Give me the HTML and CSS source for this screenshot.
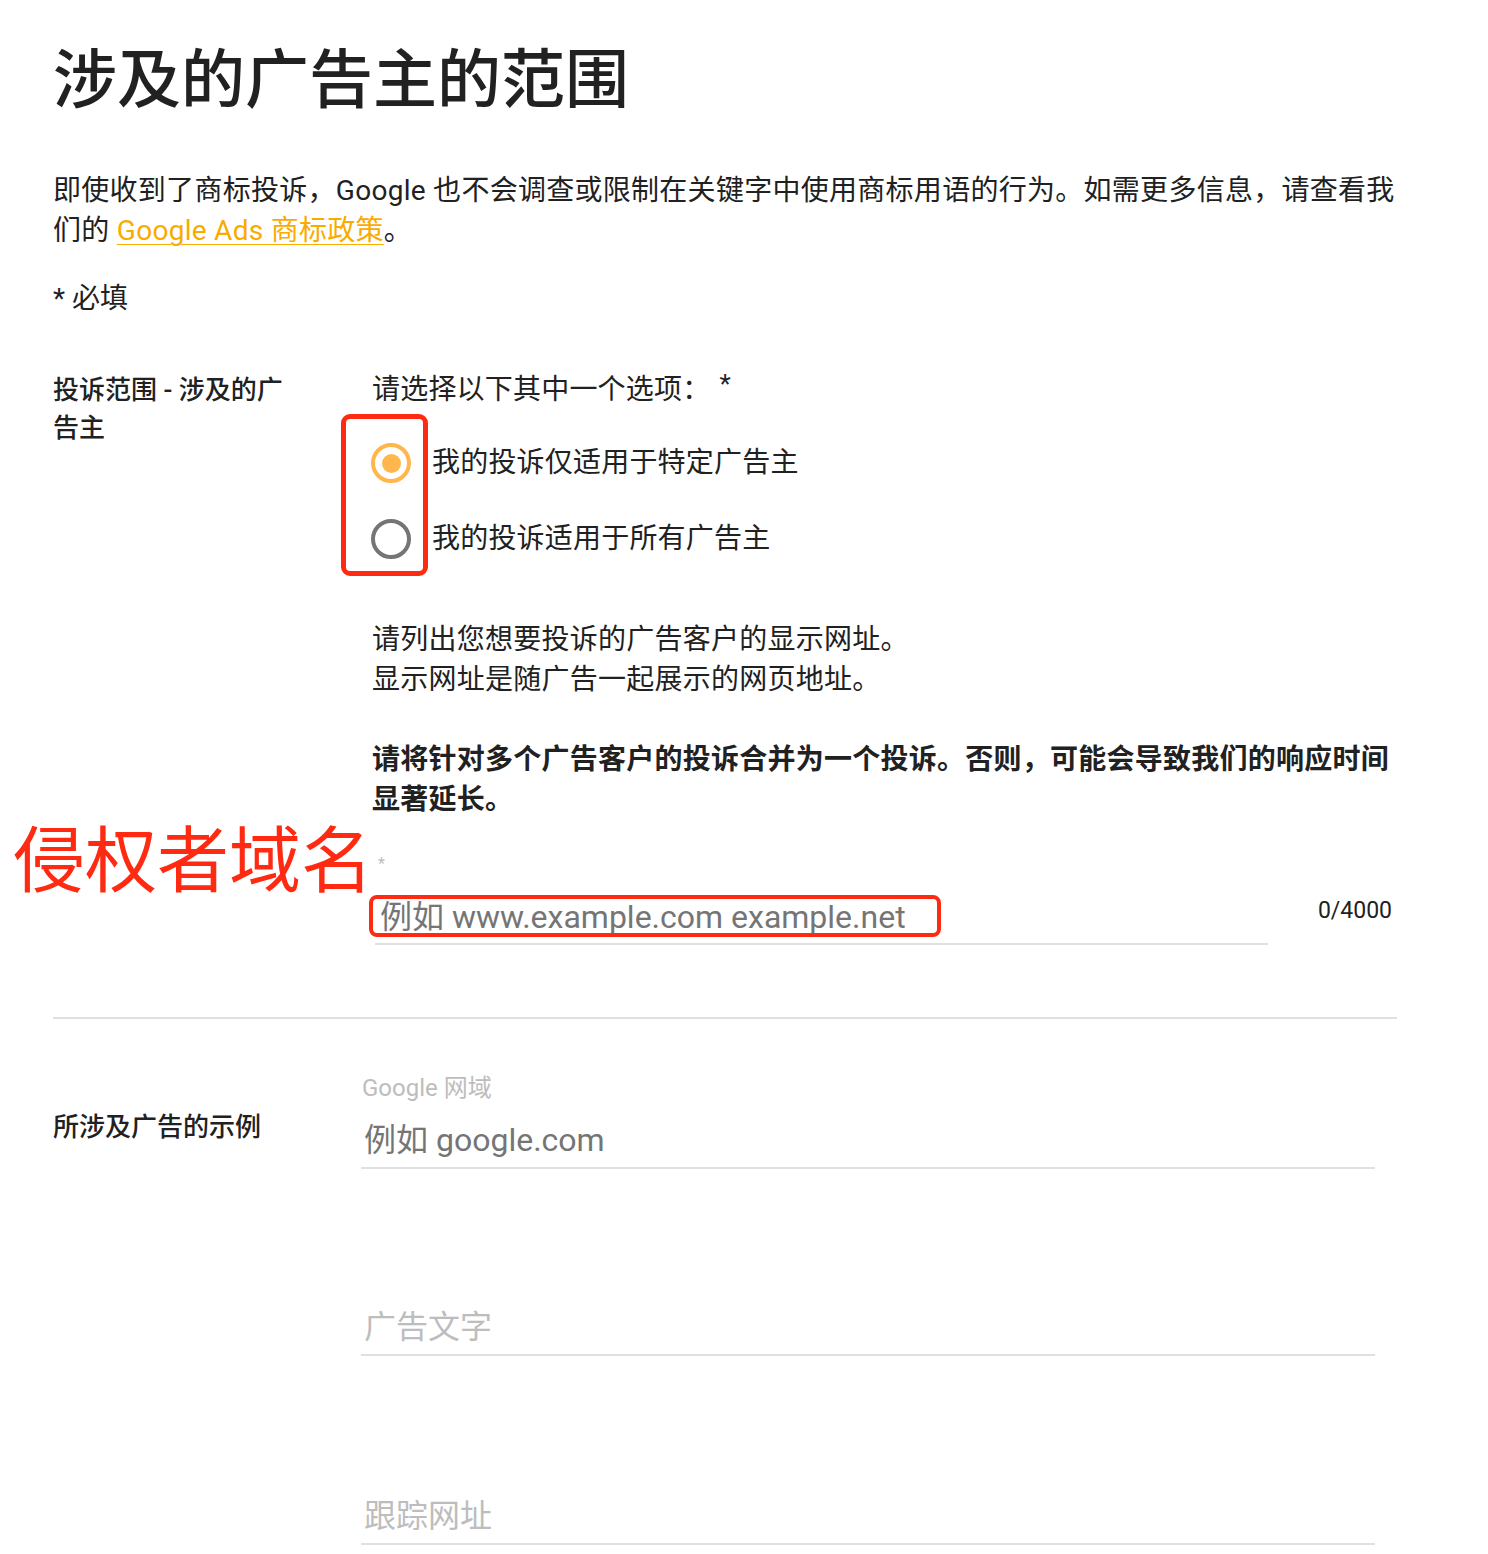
FILE: index.html
```html
<!DOCTYPE html>
<html lang="zh-CN">
<head>
<meta charset="utf-8">
<title>涉及的广告主的范围</title>
<link rel="stylesheet" href="styles.css">
</head>
<body>
<div class="page">
  <h1 class="title">涉及的广告主的范围</h1>
  <p class="intro">即使收到了商标投诉，Google 也不会调查或限制在关键字中使用商标用语的行为。如需更多信息，请查看我们的 <a class="link" href="#">Google Ads 商标政策</a>。</p>
  <p class="required">* 必填</p>

  <section class="row row-scope">
    <div class="label label-scope">投诉范围 - 涉及的广告主</div>
    <div class="field">
      <div class="question">请选择以下其中一个选项： <span class="q-star">*</span></div>
      <div class="radios">
        <div class="radio">
          <span class="circle checked"><span class="dot"></span></span>
          <span class="radio-text">我的投诉仅适用于特定广告主</span>
        </div>
        <div class="radio">
          <span class="circle"></span>
          <span class="radio-text">我的投诉适用于所有广告主</span>
        </div>
        <div class="anno-box"></div>
      </div>
      <div class="desc">请列出您想要投诉的广告客户的显示网址。<br>显示网址是随广告一起展示的网页地址。</div>
      <div class="desc desc-bold">请将针对多个广告客户的投诉合并为一个投诉。否则，可能会导致我们的响应时间显著延长。</div>
      <div class="domain">
        <div class="anno-text">侵权者域名</div>
        <div class="tiny-star">*</div>
        <div class="input-row">
          <div class="input input-domain">
            <span class="placeholder">例如 www.example.com example.net</span>
            <div class="anno-input"></div>
          </div>
          <div class="counter">0/4000</div>
        </div>
      </div>
    </div>
  </section>

  <div class="divider"></div>

  <section class="row row-examples">
    <div class="label label-examples">所涉及广告的示例</div>
    <div class="field">
      <div class="ex-field">
        <div class="ex-label">Google 网域</div>
        <div class="input ex-input"><span class="placeholder dark">例如 google.com</span></div>
      </div>
      <div class="ex-field spaced">
        <div class="ex-label"></div>
        <div class="input ex-input"><span class="placeholder light">广告文字</span></div>
      </div>
      <div class="ex-field spaced last">
        <div class="ex-label"></div>
        <div class="input ex-input"><span class="placeholder light">跟踪网址</span></div>
      </div>
    </div>
  </section>
</div>
</body>
</html>
```

FILE: styles.css
```css
* { box-sizing: border-box; }

html, body {
  margin: 0;
  padding: 0;
  background: #ffffff;
}

body {
  font-family: Roboto, "Noto Sans CJK SC", sans-serif;
  color: #212121;
}

.page {
  width: 1344px;
  margin-left: 53px;
  padding-top: 43px;
}

.title {
  margin: 0;
  font-size: 64px;
  line-height: 76px;
  font-weight: 500;
  color: #212121;
}

.intro {
  margin: 52px 0 0;
  font-size: 28px;
  line-height: 40px;
  letter-spacing: 0.28px;
  color: #212121;
}

.link {
  color: #f9ab00;
  text-decoration: underline;
  text-underline-offset: 4px;
  text-decoration-thickness: 1px;
}

.required {
  margin: 28px 0 0;
  font-size: 28px;
  line-height: 40px;
}

.row {
  display: grid;
}

.row-scope {
  grid-template-columns: 319px 1fr;
  margin-top: 51px;
}

.row-examples {
  grid-template-columns: 308px 1fr;
  margin-top: 54px;
}

.label {
  font-size: 26px;
  line-height: 38px;
  font-weight: 500;
  color: #212121;
}

.label-scope {
  width: 250px;
  padding-top: 1px;
}

.label-examples {
  margin-top: 35px;
}

.field {
  position: relative;
  min-width: 0;
}

.question {
  font-size: 28px;
  line-height: 40px;
  letter-spacing: 0.2px;
}

.q-star {
  font-size: 26px;
  margin-left: 2px;
  position: relative;
  top: -6px;
}

.radios {
  position: relative;
  margin-top: 15px;
}

.radio {
  display: flex;
  align-items: center;
  height: 76px;
}

.circle {
  width: 40px;
  height: 40px;
  border: 4px solid #757575;
  border-radius: 50%;
  margin-left: -1px;
  margin-right: 21px;
  display: flex;
  align-items: center;
  justify-content: center;
  flex: none;
}

.circle.checked {
  border-color: #ffb74d;
}

.dot {
  width: 19px;
  height: 19px;
  border-radius: 50%;
  background: #ffb74d;
}

.radio-text {
  font-size: 28px;
  line-height: 40px;
  letter-spacing: 0.2px;
}

.anno-box {
  position: absolute;
  left: -31px;
  top: -11px;
  width: 87px;
  height: 162px;
  border: 5px solid #ff2a12;
  border-radius: 9px;
}

.desc {
  margin-top: 43px;
  font-size: 28px;
  line-height: 40px;
  letter-spacing: 0.25px;
}

.desc-bold {
  margin-top: 40px;
  font-weight: 700;
}

.domain {
  position: relative;
  padding-top: 32px;
}

.anno-text {
  position: absolute;
  left: -359px;
  top: 6px;
  font-size: 72px;
  line-height: 72px;
  color: #ff2a12;
  white-space: nowrap;
}

.tiny-star {
  font-size: 16px;
  line-height: 24px;
  color: #bdbdbd;
  padding-left: 6px;
}

.input-row {
  display: flex;
  align-items: flex-start;
  margin-top: 21px;
}

.input {
  position: relative;
  border-bottom: 2px solid #e0e0e0;
  padding-bottom: 6px;
}

.input-domain {
  margin-left: 3px;
  width: 893px;
  padding-left: 5px;
}

.placeholder {
  display: block;
  font-size: 32px;
  line-height: 40px;
  color: #757575;
  white-space: nowrap;
}

.placeholder.light {
  color: #bdbdbd;
}

.anno-input {
  position: absolute;
  left: -6px;
  top: -2px;
  width: 572px;
  height: 42px;
  border: 4px solid #ff2a12;
  border-radius: 8px;
}

.counter {
  margin-left: auto;
  margin-top: -1px;
  font-size: 23px;
  line-height: 30px;
  color: #212121;
  padding-right: 5px;
}

.divider {
  margin-top: 72px;
  height: 2px;
  background: #e0e0e0;
}

.ex-field {
  width: 1014px;
}

.ex-field.spaced {
  margin-top: 91px;
}

.ex-field.spaced.last {
  margin-top: 93px;
}

.ex-label {
  height: 30px;
  font-size: 24px;
  line-height: 30px;
  color: #bdbdbd;
  padding-left: 1px;
}

.ex-input {
  margin-top: 17px;
  padding-bottom: 7px;
}

.ex-input .placeholder {
  padding-left: 3px;
}
```
